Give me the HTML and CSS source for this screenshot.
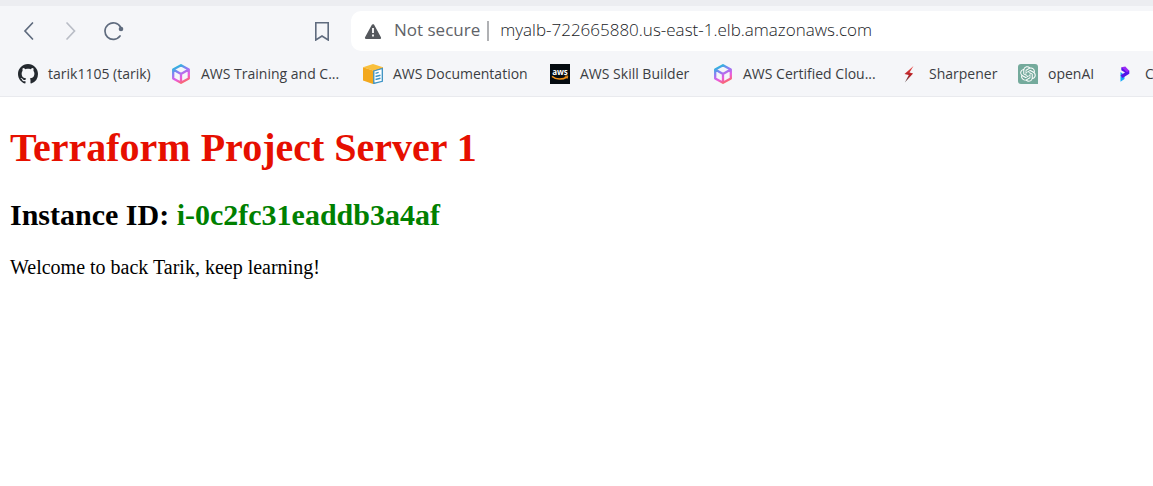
FILE: index.html
```html
<!DOCTYPE html>
<html lang="en">
<head>
<meta charset="utf-8">
<title>Terraform Project Server 1</title>
<link rel="stylesheet" href="styles.css">
</head>
<body>
<svg class="defs" aria-hidden="true">
  <defs>
    <linearGradient id="cube-color" gradientUnits="userSpaceOnUse" x1="5" y1="1" x2="14" y2="20">
      <stop offset="0" stop-color="#16c3d8"/>
      <stop offset=".35" stop-color="#8b7cf5"/>
      <stop offset=".65" stop-color="#ea5be0"/>
      <stop offset="1" stop-color="#ff6a45"/>
    </linearGradient>
    <linearGradient id="bolt-color" x1="0" y1="0" x2="0" y2="1">
      <stop offset="0" stop-color="#f0504c"/>
      <stop offset=".55" stop-color="#b51f24"/>
      <stop offset="1" stop-color="#555"/>
    </linearGradient>
    <symbol id="cube" viewBox="0 0 20 20">
      <path d="M10 1.200 17.800 5.600v8.800L10 18.800 2.200 14.400V5.600zM2.200 5.600 10 10l7.800-4.400M10 10v8.800" fill="none" stroke="url(#cube-color)" stroke-width="2.300" stroke-linejoin="round"/>
    </symbol>
  </defs>
</svg>
<header class="browser">
  <div class="tab-edge"></div>
  <div class="toolbar">
    <div class="controls">
      <div class="nav">
        <button class="nav-button" aria-label="Back"><svg class="icon" viewBox="0 0 20 20"><path d="M14.500 2 7 10l7.500 8" fill="none" stroke="#5f6b7e" stroke-width="1.700" stroke-linecap="round"/></svg></button>
        <button class="nav-button" aria-label="Forward"><svg class="icon" viewBox="0 0 20 20"><path d="m6 2 7.500 8L6 18" fill="none" stroke="#b9bdc6" stroke-width="1.700" stroke-linecap="round"/></svg></button>
        <button class="nav-button" aria-label="Reload"><svg class="icon" viewBox="0 0 20 20"><path d="M16.500 6A8.300 8.300 0 1 0 16 15" fill="none" stroke="#5f6b7e" stroke-width="1.700" stroke-linecap="round"/><circle cx="17" cy="8" r="2.300" fill="#5f6b7e"/></svg></button>
      </div>
      <button class="nav-button" aria-label="Bookmark this page"><svg class="icon" viewBox="0 0 20 20"><path d="M3.800 1.800h12.400v17.200L10 15 3.800 19z" fill="none" stroke="#5f6b7e" stroke-width="1.600"/></svg></button>
    </div>
    <div class="address">
      <svg class="icon" viewBox="0 0 20 20"><path d="M10 4.500 16.800 16.800H3.200z" fill="#55585d" stroke="#55585d" stroke-width="2.600" stroke-linejoin="round"/><path d="M10 7v5M10 13.500v2" stroke="#fff" stroke-width="1.800"/></svg>
      <label class="security" for="url">Not secure</label>
      <span class="divider"></span>
      <input class="url" id="url" type="text" value="myalb-722665880.us-east-1.elb.amazonaws.com">
    </div>
  </div>
  <nav class="bookmarks" aria-label="Bookmarks">
    <a class="bookmark" href="#"><svg class="icon" viewBox="0 0 16 16"><path fill="#24292f" d="M8 0C3.580 0 0 3.580 0 8c0 3.540 2.290 6.530 5.470 7.590.4.070.55-.17.55-.38 0-.19-.01-.82-.01-1.490-2.010.37-2.530-.49-2.690-.94-.09-.23-.48-.94-.82-1.130-.28-.15-.68-.52-.01-.53.63-.01 1.080.58 1.230.82.72 1.210 1.870.87 2.330.66.07-.52.28-.87.51-1.070-1.780-.2-3.640-.89-3.640-3.950 0-.87.31-1.590.82-2.150-.08-.2-.36-1.020.08-2.120 0 0 .67-.21 2.200.82.64-.18 1.320-.27 2-.27s1.360.09 2 .27c1.530-1.040 2.200-.82 2.200-.82.44 1.100.16 1.920.08 2.120.51.56.82 1.270.82 2.150 0 3.070-1.870 3.750-3.650 3.950.29.25.54.73.54 1.480 0 1.070-.01 1.930-.01 2.200 0 .21.15.46.55.38A8.010 8.010 0 0 0 16 8c0-4.420-3.580-8-8-8z"/></svg>tarik1105 (tarik)</a>
    <a class="bookmark" href="#"><svg class="icon"><use href="#cube"/></svg>AWS Training and C...</a>
    <a class="bookmark" href="#"><svg class="icon" viewBox="0 0 20 20"><path fill="#f9c03c" d="M0 3.200 10 0l10 3.200L10 6.500z"/><path fill="#f3a81d" d="M0 3.200 10 6.500V20L0 16.500z"/><path fill="#e09116" d="m10 6.500 10-3.300V16.500L10 20z"/><path fill="#fff" stroke="#3b94c8" stroke-width="1.300" d="m10.800 7 8.500-2.500v12.800l-8.500 2.100z"/><path stroke="#3b94c8" stroke-width="1.400" d="m12.500 9.300 3.200-.9M12.500 12.500l5-1.200M12.500 15.500l5-1.200"/></svg>AWS Documentation</a>
    <a class="bookmark" href="#"><svg class="icon" viewBox="0 0 20 20"><path fill="#050b10" d="M0 0h20v20H0z"/><text class="aws" x="10" y="10.500" text-anchor="middle">aws</text><path d="M2 12.300c4.500 3.600 10.500 3.600 15 .7" fill="none" stroke="#f29118" stroke-width="1.500"/><path d="m14.800 12.200 3-.3-.7 2.800" fill="none" stroke="#f29118"/></svg>AWS Skill Builder</a>
    <a class="bookmark" href="#"><svg class="icon"><use href="#cube"/></svg>AWS Certified Clou...</a>
    <a class="bookmark" href="#"><svg class="icon" viewBox="0 0 20 20"><path fill="url(#bolt-color)" d="M14.500 2 5.500 10l4.300 1-4 7.500 8.300-9-3.600-1z"/></svg>Sharpener</a>
    <a class="bookmark" href="#"><svg class="icon" viewBox="0 0 20 20"><path fill="#74aa9c" d="M3 0h14a3 3 0 0 1 3 3v17H3a3 3 0 0 1-3-3V3a3 3 0 0 1 3-3z"/><path transform="translate(2.200 2.200) scale(.65)" fill="#fff" d="M22.2819 9.8211a5.9847 5.9847 0 0 0-.5157-4.9108 6.0462 6.0462 0 0 0-6.5098-2.9A6.0651 6.0651 0 0 0 4.9807 4.1818a5.9847 5.9847 0 0 0-3.9977 2.9 6.0462 6.0462 0 0 0 .7427 7.0966 5.98 5.98 0 0 0 .511 4.9107 6.051 6.051 0 0 0 6.5146 2.9001A5.9847 5.9847 0 0 0 13.2599 24a6.0557 6.0557 0 0 0 5.7718-4.2058 5.9894 5.9894 0 0 0 3.9977-2.9001 6.0557 6.0557 0 0 0-.7475-7.0729zm-9.022 12.6081a4.4755 4.4755 0 0 1-2.8764-1.0408l.1419-.0804 4.7783-2.7582a.7948.7948 0 0 0 .3927-.6813v-6.7369l2.02 1.1686a.071.071 0 0 1 .038.052v5.5826a4.504 4.504 0 0 1-4.4945 4.4944zm-9.6607-4.1254a4.4708 4.4708 0 0 1-.5346-3.0137l.142.0852 4.783 2.7582a.7712.7712 0 0 0 .7806 0l5.8428-3.3685v2.3324a.0804.0804 0 0 1-.0332.0615L9.74 19.9502a4.4992 4.4992 0 0 1-6.1408-1.6464zM2.3408 7.8956a4.485 4.485 0 0 1 2.3655-1.9728V11.6a.7664.7664 0 0 0 .3879.6765l5.8144 3.3543-2.0201 1.1685a.0757.0757 0 0 1-.071 0l-4.8303-2.7865A4.504 4.504 0 0 1 2.3408 7.872zm16.5963 3.8558L13.1038 8.364 15.1192 7.2a.0757.0757 0 0 1 .071 0l4.8303 2.7913a4.4944 4.4944 0 0 1-.6765 8.1042v-5.6772a.79.79 0 0 0-.407-.667zm2.0107-3.0231l-.142-.0852-4.7735-2.7818a.7759.7759 0 0 0-.7854 0L9.409 9.2297V6.8974a.0662.0662 0 0 1 .0284-.0615l4.8303-2.7866a4.4992 4.4992 0 0 1 6.6802 4.66zM8.3065 12.863l-2.02-1.1638a.0804.0804 0 0 1-.038-.0567V6.0742a4.4992 4.4992 0 0 1 7.3757-3.4537l-.142.0805L8.704 5.459a.7948.7948 0 0 0-.3927.6813zm1.0976-2.3654l2.602-1.4998 2.6069 1.4998v2.9994l-2.5974 1.4997-2.6067-1.4997Z"/></svg>openAI</a>
    <a class="bookmark" href="#"><svg class="icon" viewBox="0 0 20 20"><path fill="#16aaf8" d="M5.500 8 9.500 11v4l-4 2.800z"/><path fill="#5316e8" d="m5.500 11.300 4.500-2.800-3.700-2.300V3.200l8 3.500v3L7.500 14z"/><path fill="#9a28f6" d="m6.300 3.200 4-.7 4 4.200-2.300 1.500z"/></svg>C</a>
  </nav>
</header>
<main class="page">
  <h1 class="title">Terraform Project Server 1</h1>
  <h2 class="instance">Instance ID: <span class="instance-id">i-0c2fc31eaddb3a4af</span></h2>
  <p class="welcome">Welcome to back Tarik, keep learning!</p>
</main>
</body>
</html>
```
FILE: styles.css
```css
* { box-sizing: border-box; }
body { margin: 0; background: #fff; color: #000; font-family: "Liberation Serif", "Times New Roman", serif; overflow-x: hidden; }
.defs { display: block; width: 0; height: 0; }
.browser { background: #f5f6f9; border-bottom: 1px solid #e9eaee; font-family: "Open Sans", "Noto Sans", sans-serif; }
.tab-edge { height: 6px; background: #ecedf1; }
.toolbar { display: flex; align-items: center; gap: 19px; padding: 5px 0 0 18px; }
.controls { display: flex; flex: none; justify-content: space-between; width: 314px; }
.nav { display: flex; gap: 23px; }
.nav-button { display: flex; padding: 0; border: 0; background: none; }
.icon { flex: none; display: block; width: 20px; height: 20px; }
.address { display: flex; flex: 1; min-width: 0; align-items: center; padding: 8px 0 8px 12px; background: #fff; border-radius: 10px 0 0 10px; font-size: 17px; line-height: 24px; }
.security { margin-left: 11px; padding-bottom: 2px; line-height: 22px; font-size: 17px; color: #5f6368; white-space: nowrap; }
.divider { flex: none; width: 2px; height: 20px; margin: 0 11px 0 7px; background: #b0b1b4; }
.url { flex: 1; min-width: 0; height: 24px; padding: 0 0 2px; border: 0; outline: 0; background: none; color: #202226; font: inherit; font-weight: 300; }
.bookmarks { display: grid; grid-template-columns: 153px 192px 187px 163px 186px 119px 97px auto; height: 45px; align-items: center; padding-left: 18px; overflow: hidden; white-space: nowrap; }
.bookmark { display: flex; align-items: center; gap: 10px; color: #3b3d42; font-size: 14px; line-height: 20px; text-decoration: none; }
.aws { fill: #fff; font: bold 8px "Open Sans", sans-serif; }
.page { padding: 28px 10px; }
.title { margin: 0; color: #e60f00; font-size: 40px; line-height: 46px; }
.instance { margin: 26px 0 24px; font-size: 30px; line-height: 35px; }
.instance-id { color: #008000; }
.welcome { margin: 0; font-size: 20px; line-height: 23px; }
```
